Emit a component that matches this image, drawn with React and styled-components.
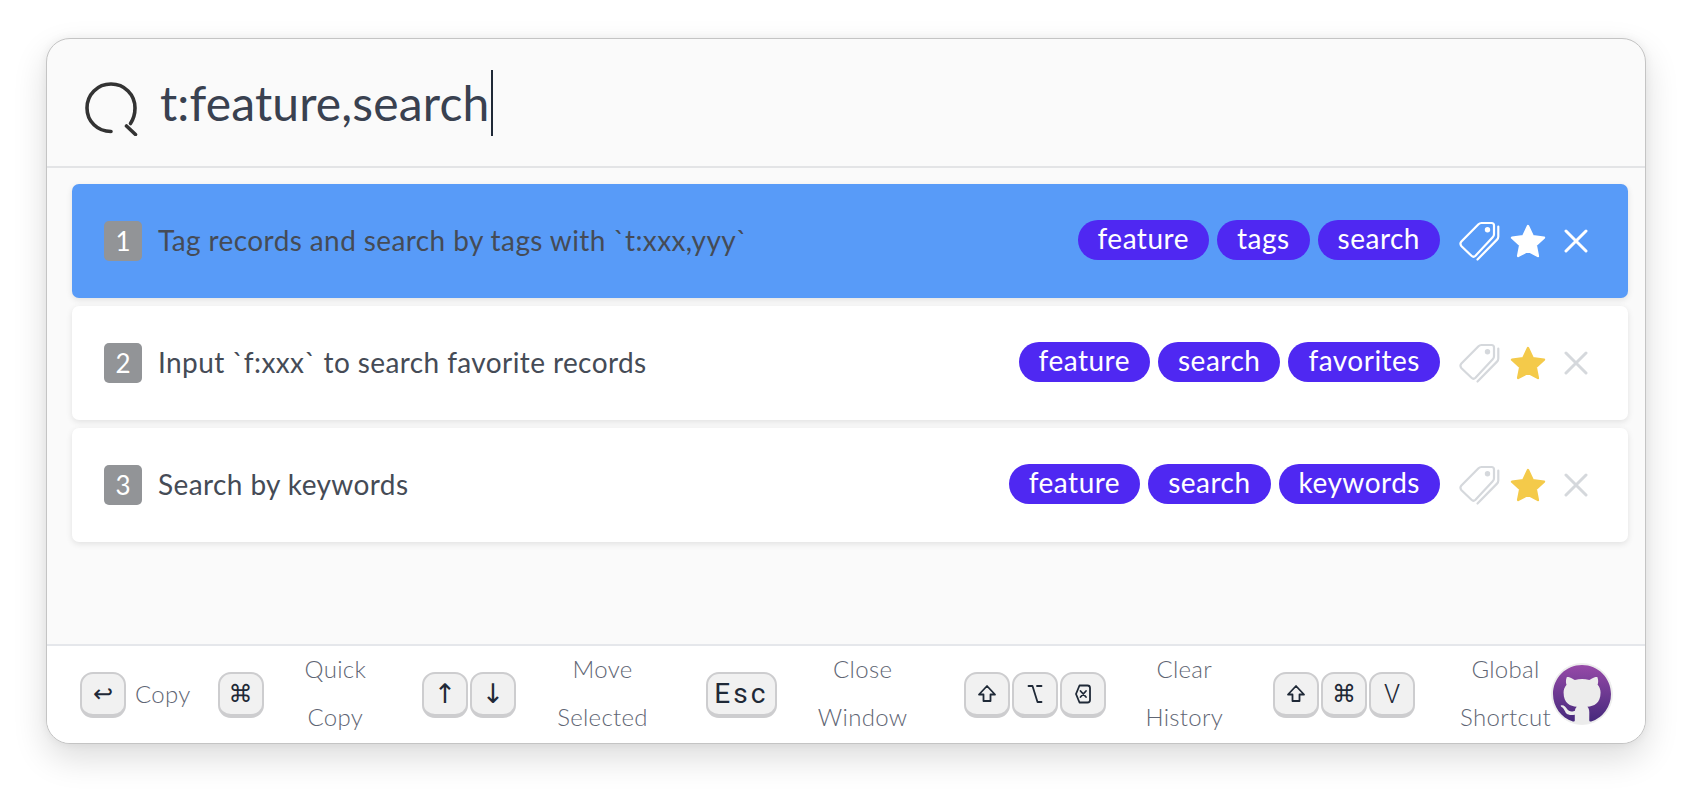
import React from 'react';
import styled, { createGlobalStyle } from 'styled-components';

const records = [
    { id: 1, text: 'Tag records and search by tags with `t:xxx,yyy`', tags: ['feature', 'tags', 'search'], active: true },
    { id: 2, text: 'Input `f:xxx` to search favorite records', tags: ['feature', 'search', 'favorites'] },
    { id: 3, text: 'Search by keywords', tags: ['feature', 'search', 'keywords'] },
];

const SearchIcon = () => (
    <SearchSvg viewBox="0 0 54 54" fill="none" stroke="#333" strokeWidth="3.6" strokeLinecap="round">
        <path d="M26 49.500C12.500 49.500 2 39.500 2 26S12.500 2 26 2 50 12.500 50 26c0 6-1.500 11-4.500 15.500" />
        <path d="M41.500 44l9 8.500" />
    </SearchSvg>
);

const TagIcon = ({ color }) => (
    <ActionSvg viewBox="0 0 43 41" width="43" height="41" fill="none" stroke={color} strokeWidth="2.2" strokeLinecap="round" strokeLinejoin="round">
        <path d="M3.400 20.500L20.500 3.200Q21.700 2 23.500 2H33.500Q36 2 36 4.500V13.200Q36 15 34.700 16.300L17.500 34.700Q15.500 36.700 13.500 34.800L3.500 25.200Q1.400 22.800 3.400 20.500Z" />
        <path d="M40.300 5.500V15.500Q40.300 17.300 39 18.600L19.500 38.500" />
        <circle cx="29.500" cy="8.700" r="1.600" fill={color} />
    </ActionSvg>
);

const StarIcon = ({ color }) => (
    <ActionSvg viewBox="0 0 36 34" width="36" height="34" fill={color} stroke={color} strokeWidth="2.4" strokeLinejoin="round">
        <path d="M18 2L22.800 12.300 34 13.700 25.800 21.200 27.900 32 18 26.700 8.100 32 10.200 21.200 2 13.700 13.200 12.300Z" />
    </ActionSvg>
);

const CloseIcon = ({ color }) => (
    <ActionSvg viewBox="0 0 24 24" width="24" height="24" fill="none" stroke={color} strokeWidth="3" strokeLinecap="round">
        <path d="M2 2L22 22M22 2L2 22" />
    </ActionSvg>
);

const ShiftIcon = () => (
    <KeySvg viewBox="0 0 20 20" width="20" height="20">
        <path d="M10 2L18 10.500H13.500V17H6.500V10.500H2Z" />
    </KeySvg>
);

const OptionIcon = () => (
    <KeySvg viewBox="0 0 16 20" width="16" height="20">
        <path d="M1.500 2H5.500L10.500 18H14.500M10 2H14.500" />
    </KeySvg>
);

const DeleteIcon = () => (
    <KeySvg viewBox="0 0 18 20" width="18" height="20">
        <path d="M5.500 1.500H13.500Q16 1.500 16 4V16Q16 18.500 13.500 18.500H5.500L2 10Z" />
        <path d="M6.500 7L12 13M12 7L6.500 13" />
    </KeySvg>
);

const GithubAvatar = () => (
    <Avatar>
        <svg viewBox="0 0 16 16" width="58" height="58">
            <defs>
                <linearGradient id="octo" x1="0" y1="0" x2="0" y2="1">
                    <stop offset="0" stopColor="#964aa8" />
                    <stop offset="1" stopColor="#46297c" />
                </linearGradient>
            </defs>
            <path
                fill="url(#octo)"
                d="M8 0C3.580 0 0 3.580 0 8c0 3.540 2.290 6.530 5.470 7.590.4.07.55-.17.55-.38 0-.19-.01-.82-.01-1.490-2.010.37-2.530-.49-2.690-.94-.09-.23-.48-.94-.82-1.130-.28-.15-.68-.52-.01-.53.63-.01 1.080.58 1.230.82.72 1.210 1.870.87 2.330.66.07-.52.28-.87.51-1.070-1.780-.2-3.640-.89-3.640-3.950 0-.87.31-1.590.82-2.150-.08-.2-.36-1.020.08-2.120 0 0 .67-.21 2.200.82.64-.18 1.320-.27 2-.27.68 0 1.360.09 2 .27 1.530-1.040 2.200-.82 2.200-.82.44 1.100.16 1.920.08 2.120.51.56.82 1.270.82 2.150 0 3.070-1.870 3.750-3.650 3.950.29.25.54.73.54 1.480 0 1.070-.01 1.930-.01 2.200 0 .21.15.46.55.38A8.013 8.013 0 0016 8c0-4.420-3.580-8-8-8z"
            />
        </svg>
    </Avatar>
);

const Row = ({ record }) => {
    const { id, text, tags, active } = record;
    return (
        <RowCard $active={active}>
            <Badge>{id}</Badge>
            <RowText>{text}</RowText>
            <TagList>
                {tags.map((tag) => (
                    <Tag key={tag}>{tag}</Tag>
                ))}
            </TagList>
            <Actions>
                <TagIcon color={active ? '#fff' : '#d5d8dc'} />
                <StarIcon color={active ? '#fff' : '#f4ca4a'} />
                <CloseSlot>
                    <CloseIcon color={active ? '#fff' : '#d5d8dc'} />
                </CloseSlot>
            </Actions>
        </RowCard>
    );
};

const App = () => {
    return (
        <Page>
            <GlobalStyle />
            <Window>
                <SearchBar>
                    <SearchIcon />
                    <Query>t:feature,search</Query>
                    <Caret />
                </SearchBar>
                <List>
                    {records.map((record) => (
                        <Row key={record.id} record={record} />
                    ))}
                </List>
                <Footer>
                    <KeyGroup>
                        <Key $size="24px">↩</Key>
                    </KeyGroup>
                    <SingleLabel>Copy</SingleLabel>
                    <KeyGroup>
                        <Key $size="24px">⌘</Key>
                    </KeyGroup>
                    <Label $right="56px">Quick<br />Copy</Label>
                    <KeyGroup>
                        <Key $size="27px">↑</Key>
                        <Key $size="27px">↓</Key>
                    </KeyGroup>
                    <Label $right="58px">Move<br />Selected</Label>
                    <KeyGroup>
                        <LetterKey $wide $size="28px" $spacing="3px">Esc</LetterKey>
                    </KeyGroup>
                    <Label>Close<br />Window</Label>
                    <KeyGroup>
                        <Key><ShiftIcon /></Key>
                        <Key><OptionIcon /></Key>
                        <Key><DeleteIcon /></Key>
                    </KeyGroup>
                    <Label $left="39px" $right="50px">Clear<br />History</Label>
                    <KeyGroup>
                        <Key><ShiftIcon /></Key>
                        <Key $size="24px">⌘</Key>
                        <LetterKey $size="26px" $weight="300">V</LetterKey>
                    </KeyGroup>
                    <Label $left="45px" $right="0">Global<br />Shortcut</Label>
                    <GithubAvatar />
                </Footer>
            </Window>
        </Page>
    );
};

const GlobalStyle = createGlobalStyle`
    html, body {
        margin: 0;
        background: #fff;
        font-family: Lato, "Open Sans", sans-serif;
    }
    * {
        box-sizing: border-box;
    }
`;

const Page = styled.div`
    width: 1692px;
    height: 798px;
    overflow: hidden;
    padding: 38px 46px 54px;
`;

const Window = styled.div`
    height: 706px;
    display: flex;
    flex-direction: column;
    background: #fafafa;
    border: 1px solid #c4c4c4;
    border-radius: 24px;
    box-shadow: 0 14px 34px rgba(0, 0, 0, 0.14), 0 0 10px rgba(0, 0, 0, 0.06);
    overflow: hidden;
`;

const SearchBar = styled.div`
    height: 129px;
    flex-shrink: 0;
    display: flex;
    align-items: center;
    padding-left: 38px;
    border-bottom: 2px solid #e3e4e6;
`;

const SearchSvg = styled.svg`
    width: 54px;
    height: 54px;
    margin-top: 13px;
`;

const Query = styled.span`
    margin-left: 21px;
    font-size: 48px;
    font-weight: 400;
    color: #394150;
    letter-spacing: 0.15px;
`;

const Caret = styled.span`
    width: 2px;
    height: 66px;
    margin-left: 2px;
    background: #1f2937;
`;

const List = styled.div`
    flex: 1;
    display: flex;
    flex-direction: column;
    gap: 8px;
    padding: 16px 17px 0 25px;
`;

const RowCard = styled.div`
    height: 114px;
    display: flex;
    align-items: center;
    padding: 0 40px 0 32px;
    border-radius: 7px;
    background: ${(props) => (props.$active ? '#589bf8' : '#fff')};
    box-shadow: 0 2px 6px rgba(0, 0, 0, 0.1);
`;

const Badge = styled.span`
    width: 38px;
    height: 40px;
    flex-shrink: 0;
    display: flex;
    align-items: center;
    justify-content: center;
    border-radius: 5px;
    background: #929497;
    color: #fff;
    font-size: 26px;
`;

const RowText = styled.span`
    margin-left: 16px;
    margin-bottom: 2px;
    flex: 1;
    font-size: 28px;
    letter-spacing: 0.4px;
    color: #454b56;
    white-space: nowrap;
`;

const TagList = styled.div`
    display: flex;
    gap: 8px;
    margin-bottom: 2px;
`;

const Tag = styled.span`
    height: 40px;
    padding: 0 20px 4px;
    display: flex;
    align-items: center;
    border-radius: 20px;
    background: #4f28f2;
    color: #fff;
    font-size: 28px;
    letter-spacing: 0.5px;
`;

const Actions = styled.div`
    display: flex;
    align-items: center;
    margin-left: 18px;
    gap: 9px;
`;

const ActionSvg = styled.svg`
    display: block;
    flex-shrink: 0;
`;

const CloseSlot = styled.span`
    margin-left: 9px;
    display: flex;
`;

const Footer = styled.div`
    height: 99px;
    flex-shrink: 0;
    display: flex;
    align-items: center;
    padding-left: 33px;
    background: #fff;
    border-top: 2px solid #e5e7eb;
`;

const KeyGroup = styled.div`
    display: flex;
    gap: 2px;
    flex-shrink: 0;
`;

const Key = styled.kbd`
    width: ${(props) => (props.$wide ? '71px' : '46px')};
    height: 46px;
    display: flex;
    align-items: center;
    justify-content: center;
    background: #f1f1f1;
    border: 2px solid #cdcdcf;
    border-bottom-width: 4px;
    border-radius: 13px;
    color: #1f2937;
    font-family: "DejaVu Sans", sans-serif;
    font-size: ${(props) => props.$size || '18px'};
    font-weight: ${(props) => props.$weight || 400};
    line-height: 1;
    letter-spacing: ${(props) => props.$spacing || '0'};
`;

const LetterKey = styled(Key)`
    font-family: Roboto, "Liberation Sans", sans-serif;
`;

const KeySvg = styled.svg`
    fill: none;
    stroke: #1f2937;
    stroke-width: 1.8;
    stroke-linejoin: round;
    stroke-linecap: round;
`;

const Label = styled.div`
    flex-shrink: 0;
    margin: 0 ${(props) => props.$right || '57px'} 3px ${(props) => props.$left || '41px'};
    text-align: center;
    font-size: 24px;
    letter-spacing: 0.3px;
    font-weight: 300;
    line-height: 48px;
    color: #5f6674;
`;

const SingleLabel = styled(Label)`
    margin: 0 27px 2px 9px;
`;

const Avatar = styled.div`
    width: 62px;
    height: 62px;
    flex-shrink: 0;
    display: flex;
    align-items: center;
    justify-content: center;
    border-radius: 50%;
    background: #ececec;
    border: 1px solid #eee;
    margin-bottom: 2px;
`;

export default App;
